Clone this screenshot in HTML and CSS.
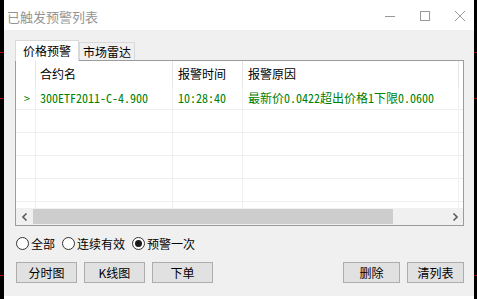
FILE: index.html
```html
<!DOCTYPE html>
<html lang="zh-CN">
<head>
  <meta charset="UTF-8">
  <title>已触发预警列表</title>
  <link rel="stylesheet" href="styles.css">
</head>
<body>
  <div class="window">
    <!-- 标题栏 -->
    <div class="titlebar">
      <span class="title">已触发预警列表</span>
      <div class="caption">
        <svg width="10" height="10" viewBox="0 0 10 10"><line x1="0" y1="5.5" x2="10" y2="5.5" stroke="#999" stroke-width="1"/></svg>
        <svg width="10" height="10" viewBox="0 0 10 10"><rect x="0.5" y="0.5" width="9" height="9" fill="none" stroke="#999" stroke-width="1"/></svg>
        <svg width="10" height="10" viewBox="0 0 10 10"><path d="M0 0 L10 10 M10 0 L0 10" stroke="#999" stroke-width="1"/></svg>
      </div>
    </div>

    <div class="client">
      <div class="tabs">
        <div class="tab active">价格预警</div>
        <div class="tab">市场雷达</div>
      </div>

      <div class="list">
        <div class="grid">
          <div class="hcell"></div>
          <div class="hcell">合约名</div>
          <div class="hcell">报警时间</div>
          <div class="hcell">报警原因</div>
          <div class="hcell last"></div>

          <div class="cell mark">&gt;</div>
          <div class="cell">300ETF2011-C-4.900</div>
          <div class="cell">10:28:40</div>
          <div class="cell">最新价0.0422超出价格1下限0.0600</div>
          <div class="cell last"></div>

          <div class="cell"></div><div class="cell"></div><div class="cell"></div><div class="cell"></div><div class="cell last"></div>
          <div class="cell"></div><div class="cell"></div><div class="cell"></div><div class="cell"></div><div class="cell last"></div>
          <div class="cell"></div><div class="cell"></div><div class="cell"></div><div class="cell"></div><div class="cell last"></div>
          <div class="cell"></div><div class="cell"></div><div class="cell"></div><div class="cell"></div><div class="cell last"></div>
          <div class="cell"></div><div class="cell"></div><div class="cell"></div><div class="cell"></div><div class="cell last"></div>
        </div>
        <div class="hscroll">
          <div class="arrow">
            <svg width="6" height="8" viewBox="0 0 6 8"><path d="M4.5 0.5 L1 4 L4.5 7.5" fill="none" stroke="#606060" stroke-width="1.6"/></svg>
          </div>
          <div class="track"><div class="thumb"></div></div>
          <div class="arrow">
            <svg width="6" height="8" viewBox="0 0 6 8"><path d="M1.5 0.5 L5 4 L1.5 7.5" fill="none" stroke="#606060" stroke-width="1.6"/></svg>
          </div>
        </div>
      </div>

      <div class="radios">
        <label class="radio"><span class="dot"></span>全部</label>
        <label class="radio"><span class="dot"></span>连续有效</label>
        <label class="radio"><span class="dot checked"></span>预警一次</label>
      </div>

      <div class="buttons">
        <button class="btn">分时图</button>
        <button class="btn">K线图</button>
        <button class="btn">下单</button>
        <span class="spacer"></span>
        <button class="btn small">删除</button>
        <button class="btn small">清列表</button>
      </div>
    </div>
  </div>
</body>
</html>
```

FILE: styles.css
```css
/* 窗口整体 */
body {
  margin: 0;
  height: 299px;
  overflow: hidden;
  background: linear-gradient(to bottom,
    #000 0 52px, #b00000 52px 53px,
    #000 53px 98px, #b00000 98px 99px,
    #000 99px 275px, #b00000 275px 276px,
    #000 276px);
  font-family: "Noto Sans CJK SC", "Liberation Sans", sans-serif;
  font-size: 12px;
  color: #000;
}
.window {
  margin-left: 4px;
  width: 470px;
  height: 299px;
  background: #fff;
  display: flex;
  flex-direction: column;
}

/* 标题栏 */
.titlebar {
  height: 30px;
  display: flex;
  align-items: center;
  justify-content: space-between;
  padding: 0 9px 0 3px;
  box-sizing: border-box;
}
.title {
  font-size: 13px;
  color: #959595;
  margin-top: 2px;
}
.caption {
  display: flex;
  align-items: center;
  gap: 25px;
  margin-top: 1px;
}
.caption svg {
  display: block;
}

/* 客户区 */
.client {
  height: 266px;
  background: #f0f0f0;
  padding: 10px 10px 0 11px;
  box-sizing: border-box;
}
.tabs {
  display: flex;
  align-items: flex-end;
  height: 20px;
}
.tab {
  height: 18px;
  line-height: 18px;
  padding: 0;
  border: 1px solid #d9d9d9;
  border-bottom: none;
  box-sizing: border-box;
  width: 56px;
  text-align: center;
  white-space: nowrap;
}
.tab.active {
  height: 21px;
  line-height: 20px;
  width: 64px;
  background: #fff;
  margin-bottom: -1px;
  position: relative;
  z-index: 1;
}

/* 列表 */
.list {
  border: 1px solid #9c9c9c;
  background: #fff;
  width: 449px;
  box-sizing: border-box;
}
.grid {
  height: 147px;
  overflow: hidden;
  display: grid;
  grid-template-columns: 20px 137px 70px 216px 4px;
  grid-auto-rows: 23px;
  grid-template-rows: 26px;
}
.hcell {
  border-right: 1px solid #e5e5e5;
  padding-left: 5px;
  line-height: 26px;
  white-space: nowrap;
}
.cell {
  border-right: 1px solid #efefef;
  border-bottom: 1px solid #efefef;
  padding-left: 5px;
  line-height: 22px;
  color: #008000;
  white-space: nowrap;
  font-family: "Noto Sans Mono CJK SC", "Noto Sans CJK SC", monospace;
}
.hcell, .cell {
  box-sizing: border-box;
  overflow: hidden;
}
.hcell:nth-child(5n+2), .cell:nth-child(5n+2) {
  padding-left: 4px;
}
.cell.mark {
  padding-left: 8px;
}
.hcell.last, .cell.last {
  border-right: none;
}

/* 横向滚动条 */
.hscroll {
  height: 17px;
  display: flex;
  background: #f0f0f0;
}
.arrow {
  width: 17px;
  display: flex;
  align-items: center;
  justify-content: center;
}
.track {
  flex: 1;
  display: flex;
  align-items: stretch;
}
.thumb {
  width: 360px;
  margin: 1px 0;
  background: #cdcdcd;
}

/* 单选 */
.radios {
  display: flex;
  align-items: center;
  height: 16px;
  margin: 9px 0 0 1px;
}
.radio {
  display: flex;
  align-items: center;
  margin-right: 7px;
}
.dot {
  width: 13px;
  height: 13px;
  border: 1px solid #333;
  border-radius: 50%;
  background: #fff;
  box-sizing: border-box;
  margin-right: 2px;
  display: flex;
  align-items: center;
  justify-content: center;
}
.dot.checked::after {
  content: '';
  width: 7px;
  height: 7px;
  border-radius: 50%;
  background: #1a1a1a;
}

/* 按钮 */
.buttons {
  display: flex;
  gap: 7px;
  margin: 11px 0 0 1px;
  width: 448px;
}
.btn {
  width: 61px;
  height: 21px;
  padding: 0;
  background: #e1e1e1;
  border: 1px solid #adadad;
  font-family: "Noto Sans CJK SC", sans-serif;
  font-size: 12px;
  color: #000;
}
.btn.small {
  width: 57px;
}
.spacer {
  flex: 1;
}
```
